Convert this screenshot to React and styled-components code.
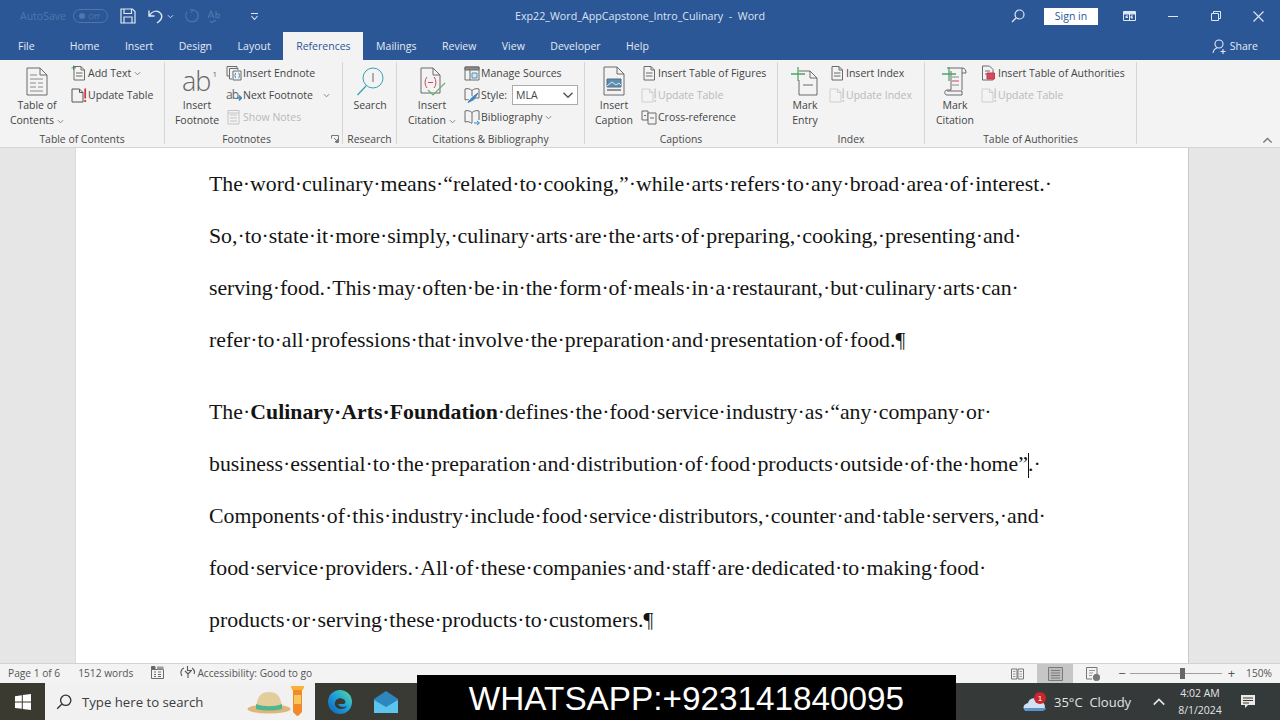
import React from "react";
import styled, { createGlobalStyle } from "styled-components";

const Global = createGlobalStyle`
  html, body { margin: 0; padding: 0; background: #e6e6e6; }
  * { box-sizing: border-box; }
`;

const UI = `"Open Sans", "Noto Sans", sans-serif`;

const Shell = styled.div`
  position: relative;
  width: 1280px;
  height: 720px;
  overflow: hidden;
  display: flex;
  flex-direction: column;
  font-family: ${UI};
`;

/* title bar */
const TitleBar = styled.div`
  height: 32px;
  background: #2b5797;
  display: grid;
  grid-template-columns: 1fr auto 1fr;
  align-items: center;
  color: #dbe4f1;
  font-size: 10.7px;
`;
const QuickAccess = styled.div`
  display: flex;
  align-items: center;
  padding-left: 20px;
`;
const AutoSave = styled.span`
  color: #4f76ad;
  font-size: 10.5px;
  width: 53px;
`;
const Toggle = styled.span`
  width: 35px;
  height: 14px;
  border: 1px solid #4f76ad;
  border-radius: 7px;
  color: #4f76ad;
  font-size: 8px;
  line-height: 12px;
  padding-left: 14px;
  margin-right: 12px;
  position: relative;
  &::before {
    content: "";
    position: absolute;
    left: 5px;
    top: 3px;
    width: 6px;
    height: 6px;
    border-radius: 50%;
    background: #4f76ad;
  }
`;
const QuickSlot = styled.span`
  display: flex;
  margin-right: ${(p) => p.$gap || 0}px;
`;
const WindowControls = styled.div`
  display: flex;
  align-items: center;
  justify-content: flex-end;
`;
const SignIn = styled.span`
  width: 54px;
  height: 17px;
  margin: 0 10px 0 19px;
  background: #fff;
  color: #2b5797;
  font-size: 10.5px;
  line-height: 17px;
  text-align: center;
`;
const WinButton = styled.span`
  width: 43px;
  display: flex;
  justify-content: center;
`;

/* tabs */
const TabRow = styled.div`
  height: 28px;
  background: #2b5797;
  display: flex;
  align-items: stretch;
  padding-left: 18px;
`;
const Tab = styled.div`
  padding: ${(p) => (p.$file ? "0 22.3px 0 0" : "0 12.77px")};
  display: flex;
  align-items: center;
  font-size: 10.5px;
  color: ${(p) => (p.$active ? "#2b5797" : "#e4eaf4")};
  background: ${(p) => (p.$active ? "#f3f3f3" : "transparent")};
`;
const Share = styled.div`
  margin-left: auto;
  padding-right: 22px;
  display: flex;
  align-items: center;
  gap: 4px;
  font-size: 10.5px;
  color: #e4eaf4;
`;

/* ribbon */
const Ribbon = styled.div`
  height: 88px;
  background: #f3f3f3;
  border-bottom: 1px solid #d4d4d4;
  display: flex;
  padding-top: 2px;
  color: #444;
  font-size: 10.5px;
`;
const Group = styled.div`
  width: ${(p) => p.$width}px;
  height: 82px;
  border-right: 1px solid #d6d6d6;
  display: flex;
  flex-direction: column;
`;
const GroupBody = styled.div`
  flex: none;
  height: 66px;
  display: flex;
  padding-left: ${(p) => p.$pad || 0}px;
`;
const GroupLabel = styled.div`
  margin-top: 4px;
  padding-right: ${(p) => (p.$launcher ? 14 : 0)}px;
  display: grid;
  grid-template-columns: 1fr auto 1fr;
  align-items: center;
  font-size: 10.4px;
  color: #4a4a4a;
  line-height: 14px;
  white-space: nowrap;
  & > span { grid-column: 2; }
  & > svg { grid-column: 3; justify-self: end; margin-right: -11px; }
`;
const BigButton = styled.div`
  width: ${(p) => p.$width}px;
  margin-right: ${(p) => p.$gap || 0}px;
  display: flex;
  flex-direction: column;
  align-items: center;
  padding-top: 4px;
`;
const BigIcon = styled.div`
  height: 30px;
  margin-bottom: 2px;
  display: flex;
  align-items: center;
  justify-content: center;
`;
const BigLabel = styled.div`
  line-height: 15px;
  text-align: center;
  white-space: nowrap;
`;
const Stack = styled.div`
  display: flex;
  flex-direction: column;
`;
const SmallRow = styled.div`
  height: 22px;
  display: flex;
  align-items: center;
  white-space: nowrap;
  color: ${(p) => (p.$off ? "#b9b9b9" : "#444")};
`;
const SmallIcon = styled.span`
  width: 17px;
  display: flex;
  align-items: center;
`;
const StyleSelect = styled.div`
  width: 66px;
  height: 20px;
  margin-left: 5px;
  padding: 0 3px;
  border: 1px solid #ababab;
  background: #fff;
  display: flex;
  align-items: center;
  justify-content: space-between;
`;
const AbGlyph = styled.span`
  font-family: "Open Sans", sans-serif;
  font-weight: 300;
  font-size: 27px;
  line-height: 28px;
  color: #666;
  letter-spacing: -1px;
  padding-left: 4px;
  & sup { font-size: 8px; font-weight: 400; vertical-align: 14px; line-height: 0; margin-left: 2px; }
`;
const SmallAb = styled.span`
  font-size: 12px;
  color: #666;
  letter-spacing: -1px;
  line-height: 16px;
`;
const CollapseSlot = styled.div`
  margin-left: auto;
  padding: 0 7px 1px 0;
  align-self: flex-end;
  display: flex;
`;

/* document */
const DocArea = styled.div`
  height: 515px;
  background: #e6e6e6;
  overflow: hidden;
`;
const Page = styled.div`
  width: 1114px;
  height: 100%;
  margin-left: 75px;
  background: #fff;
  border-right: 1px solid #c9c9c9;
  border-left: 1px solid #dcdcdc;
  padding: 10px 0 0 133px;
  font-family: "Liberation Serif", serif;
  font-size: 21.8px;
  color: #141414;
`;
const Para = styled.div`
  margin-bottom: 20px;
`;
const Line = styled.div`
  height: 52px;
  line-height: 52px;
  white-space: nowrap;
  letter-spacing: ${(p) => p.$track || 0}px;
`;
const Caret = styled.span`
  display: inline-block;
  width: 0;
  height: 25px;
  margin-right: -1px;
  border-left: 1px solid #111;
  vertical-align: -7px;
`;

/* status bar */
const StatusBar = styled.div`
  height: 20px;
  background: #f3f3f3;
  border-top: 1px solid #d2d2d2;
  display: flex;
  align-items: center;
  padding-left: 8px;
  font-size: 10.2px;
  color: #555;
`;
const StatusItem = styled.span`
  display: flex;
  align-items: center;
  gap: ${(p) => (p.$flush ? 2 : 1)}px;
  margin-right: ${(p) => p.$gap || 0}px;
  margin-left: ${(p) => (p.$push ? "auto" : 0)};
  padding-bottom: ${(p) => (p.$flush ? 0 : 2)}px;
`;
const ViewButton = styled.span`
  width: 36px;
  height: 19px;
  display: flex;
  align-items: center;
  justify-content: center;
  background: ${(p) => (p.$active ? "#c6c6c6" : "transparent")};
`;
const ZoomTrack = styled.div`
  position: relative;
  width: 92px;
  height: 1px;
  margin: 0 4px 0 2px;
  background: #a0a0a0;
  &::after {
    content: "";
    position: absolute;
    left: 50px;
    top: -5px;
    width: 5px;
    height: 11px;
    background: #666;
  }
`;
const ZoomSign = styled.span`
  font-size: 13px;
  color: #555;
  line-height: 1;
  margin-left: ${(p) => p.$left || 0}px;
`;

/* taskbar */
const Taskbar = styled.div`
  height: 37px;
  background: linear-gradient(to right, #3b3a30, #34393a);
  display: flex;
  align-items: center;
  color: #e4e4e4;
`;
const StartSlot = styled.div`
  width: 45px;
  display: flex;
  justify-content: center;
`;
const SearchBox = styled.div`
  width: 270px;
  height: 37px;
  background: #f1f1f1;
  display: flex;
  align-items: center;
  padding-left: 11px;
  color: #3c3c3c;
  font-size: 13.2px;
`;
const SearchText = styled.span`
  margin-left: 10px;
  width: 165px;
`;
const TaskApp = styled.div`
  width: ${(p) => p.$width || 46}px;
  margin-left: ${(p) => p.$left || 0}px;
  display: flex;
  justify-content: center;
`;
const Tray = styled.div`
  margin-left: auto;
  padding-right: 16px;
  display: flex;
  align-items: center;
`;
const Weather = styled.span`
  margin-left: 7px;
  font-size: 13px;
  width: 95px;
  white-space: pre;
`;
const Clock = styled.div`
  width: 64px;
  margin-left: 2px;
  text-align: center;
  font-size: 10.5px;
  line-height: 17px;
`;

const Banner = styled.div`
  position: absolute;
  left: 417px;
  top: 675px;
  width: 539px;
  height: 45px;
  background: #000;
  color: #fff;
  font-family: "Liberation Sans", Arial, sans-serif;
  font-size: 33.3px;
  line-height: 47px;
  text-align: center;
`;

/* icons */
const Ic = ({ w, h, children }) => (
  <svg width={w} height={h} viewBox={`0 0 ${w} ${h}`} fill="none" stroke="#6b6b6b" strokeWidth="1">
    {children}
  </svg>
);
const Chev = ({ c = "#777", s = 7, up, gap = 3 }) => (
  <svg width={s} height={s} viewBox="0 0 8 8" fill="none" stroke={c} strokeWidth="1" style={{ marginLeft: gap, verticalAlign: "middle" }}>
    <path d={up ? "M1 5.5L4 2.5L7 5.5" : "M1 2.5L4 5.5L7 2.5"} />
  </svg>
);

const TocIcon = () => (
  <Ic w={24} h={29}>
    <path d="M2 1H15L22 8V28H2Z" />
    <path d="M15 1V8H22" />
    <path d="M5 8H12M5 12H18M5 16H11M13 16H18M5 20H11M13 20H18M5 24H18" stroke="#8a8a8a" />
  </Ic>
);
const PageLines = ({ plus, off }) => (
  <Ic w={16} h={16}>
    <g stroke={off ? "#c9c9c9" : "#6b6b6b"}>
      <path d="M3 1.5H10L13.5 5V15H3Z" />
      <path d="M10 1.5V5H13.5" />
      <path d="M5 8H11.5M5 11H11.5" />
    </g>
    {plus && <path d="M2.5 0.5V5M0.5 2.8H5" stroke="#3f9a5c" />}
  </Ic>
);
const UpdateIcon = ({ off }) => (
  <Ic w={16} h={16}>
    <g stroke={off ? "#cfcfcf" : "#555"}>
      <path d="M1 2H8.5L12 5.5V15H1Z" />
      <path d="M8.5 2V5.5H12" />
    </g>
    <path d="M14.2 1.5V11.5M14.2 13V15" stroke={off ? "#cfcfcf" : "#d1344b"} strokeWidth="1.8" />
  </Ic>
);
const EndnoteIcon = () => (
  <Ic w={17} h={16}>
    <path d="M1 1.5H11V3M1 1.5V11H3" />
    <path d="M3.5 3.5H12V5M3.5 3.5V14H6" />
    <path d="M7 6H15V15H7Z" />
    <path d="M10 8C9 8 9.5 10.5 8.7 10.5C9.5 10.5 9 13 10 13M12.5 8C13.5 8 13 10.5 13.8 10.5C13 10.5 13.5 13 12.5 13" stroke="#2f7fb8" />
  </Ic>
);
const NextNoteIcon = () => (
  <svg width="5" height="8" viewBox="0 0 5 8" fill="none" stroke="#2f86c0" strokeWidth="1.4" style={{ marginLeft: -1, marginTop: 5 }}>
    <path d="M0 4H4M2 1.5L4.5 4L2 6.5" />
  </svg>
);
const NotesIcon = () => (
  <Ic w={16} h={16}>
    <g stroke="#c4c4c4">
      <path d="M2 1.5H13V15H2Z" />
      <path d="M4 6H11M4 9H11M4 12H11M2 4H13" />
    </g>
  </Ic>
);
const SearchIcon = () => (
  <Ic w={28} h={30}>
    <circle cx="17" cy="12" r="10" stroke="#3aa0b6" />
    <path d="M17 7V16" stroke="#666" />
    <path d="M10 20L1.5 29" stroke="#3aa0b6" strokeWidth="1.3" />
  </Ic>
);
const CitationIcon = () => (
  <Ic w={28} h={31}>
    <path d="M3 2H15L22 9V27H3Z" />
    <path d="M15 2V9H22" />
    <path d="M9 11C6.5 14 6.5 19 9 22M16 11C18.5 14 18.5 19 16 22M10 16.5H15" stroke="#c8475a" />
    <path d="M10 24L15 29L27 17" stroke="#6cae72" strokeWidth="1.2" />
  </Ic>
);
const SourcesIcon = () => (
  <Ic w={17} h={16}>
    <path d="M1 2H15V15H1Z" />
    <path d="M1 2H15V5H1Z" fill="#8a8a8a" />
    <path d="M6 5V15" />
    <path d="M8 8H13V13H8Z" fill="#d7e6ef" stroke="#4c8fb5" />
  </Ic>
);
const StyleIcon = () => (
  <Ic w={17} h={17}>
    <path d="M1 2C4 1 6 2 8 3.5C10 2 12 1 15 2V11H11M1 2V13C3 12.5 4 12.5 5 13M8 3.5V9" />
    <path d="M4 15.5L8 10.5L14 6L10 12.5Z" fill="#3e86c2" stroke="#3e86c2" />
  </Ic>
);
const BibIcon = () => (
  <Ic w={17} h={17}>
    <path d="M1 2C4 1 6 2 8 3.5C10 2 12 1 15 2V11M1 2V13C4 12 6 13 8 14.5M8 3.5V14" />
    <path d="M10 14H15M13 12L15.5 14L13 16" stroke="#3e86c2" />
  </Ic>
);
const CaptionIcon = () => (
  <Ic w={22} h={30}>
    <path d="M1 1H14L21 8V29H1Z" />
    <path d="M14 1V8H21" />
    <path d="M4 13H18V21H4Z" fill="#5d8db0" stroke="#4d6f8a" />
    <path d="M4 20L9 16L13 19L16 17L18 19" stroke="#dbe8f0" />
    <path d="M4 24H18" stroke="#333" />
  </Ic>
);
const CrossRefIcon = () => (
  <Ic w={17} h={16}>
    <path d="M1 2H7V11H1Z" />
    <path d="M7 4H15V15H7Z" fill="#f3f3f3" />
    <path d="M3 6.5H5M9 9H13" />
  </Ic>
);
const EntryIcon = () => (
  <Ic w={30} h={30}>
    <path d="M9 5H20L27 12V29H9V14" />
    <path d="M20 5V12H27" />
    <path d="M13 19H23" />
    <path d="M1 8H15M8 1V15" stroke="#4fa56a" strokeWidth="1.3" />
  </Ic>
);
const ScrollIcon = () => (
  <Ic w={28} h={31}>
    <path d="M6 2H21V24M21 2C24 2 25 4 25 7H21" />
    <path d="M10 5V24M6 25H21V29H6C3 29 3 24 6 24H10" />
    <path d="M1 8H15M8 1V15" stroke="#4fa56a" strokeWidth="1.3" />
    <path d="M11 15H18" stroke="#c8475a" />
    <path d="M11 11H18M11 19H18" stroke="#8a8a8a" />
  </Ic>
);
const AuthoritiesIcon = () => (
  <Ic w={16} h={16}>
    <path d="M1.5 1H8.5L12 4.5V15H1.5Z" />
    <path d="M4 6H9M4 9H7" />
    <path d="M6 8H13.5V14H6Z" fill="#d9495c" stroke="#c23a4d" />
  </Ic>
);
const LauncherIcon = () => (
  <svg width="8" height="8" viewBox="0 0 8 8" fill="none" stroke="#777">
    <path d="M0.5 3.5V0.5H7.5V7.5H4.5M3 3L6.5 6.5M6.5 4V6.5H4" />
  </svg>
);
const SaveIcon = () => (
  <Ic w={16} h={16}>
    <g stroke="#dfe7f3" strokeWidth="1.2">
      <path d="M1 1H12.5L15 3.5V15H1Z" />
      <path d="M4 1V5.5H11.5V1M4 15V9H12V15" />
    </g>
  </Ic>
);
const UndoIcon = () => (
  <Ic w={16} h={15}>
    <path d="M1 1.5V7H6.5M1.5 6.5C4 2.5 8 1.5 11 3C15 5.5 15 10 9 14" stroke="#dfe7f3" strokeWidth="1.4" />
  </Ic>
);
const RedoIcon = () => (
  <Ic w={16} h={16}>
    <path d="M9 2C13 2.5 15 6 14 9.5C12.5 14 7 15 3.5 12C1 9.5 1.5 6 3 4M6 1.5L9 2L7 4.5" stroke="#4f76ad" strokeWidth="1.2" />
  </Ic>
);
const SpellIcon = () => (
  <svg width="17" height="14" viewBox="0 0 17 14" fill="none" stroke="#4f76ad" strokeWidth="1.1">
    <path d="M1 9L4 2L7 9M2 7H6M9 2V9M9 6C10 4.5 13 5 12.5 7C12.5 9 10 9.5 9 8M3 12L5 13.5L9 11" />
  </svg>
);
const CustomizeIcon = () => (
  <svg width="9" height="9" viewBox="0 0 9 9" fill="none" stroke="#dfe7f3" strokeWidth="1.1">
    <path d="M1 1.5H8M1.5 4L4.5 7.5L7.5 4" />
  </svg>
);
const LoupeIcon = ({ c = "#dfe7f3", s = 14 }) => (
  <svg width={s} height={s} viewBox="0 0 14 14" fill="none" stroke={c} strokeWidth="1.2">
    <circle cx="8.5" cy="5.5" r="4.5" />
    <path d="M5 9L1 13" />
  </svg>
);
const DisplayIcon = () => (
  <svg width="13" height="10" viewBox="0 0 13 10" fill="none" stroke="#dfe7f3">
    <path d="M0.5 0.5H12.5V9.5H0.5Z" />
    <path d="M1 1H12V3H1ZM6.5 3V9M3 5H5M8 5H10M3 5V7L4 6L5 7M8 5V7H10" fill="#dfe7f3" />
  </svg>
);
const MinIcon = () => (
  <svg width="10" height="10" viewBox="0 0 10 10" stroke="#dfe7f3"><path d="M0 5.5H10" /></svg>
);
const RestoreIcon = () => (
  <svg width="10" height="10" viewBox="0 0 10 10" fill="none" stroke="#dfe7f3">
    <path d="M0.5 2.5H7.5V9.5H0.5Z" />
    <path d="M2.5 2.5V0.5H9.5V7.5H7.5" />
  </svg>
);
const CloseIcon = () => (
  <svg width="11" height="11" viewBox="0 0 11 11" stroke="#dfe7f3" strokeWidth="1.1"><path d="M0.5 0.5L10.5 10.5M10.5 0.5L0.5 10.5" /></svg>
);
const ShareIcon = () => (
  <svg width="14" height="15" viewBox="0 0 14 15" fill="none" stroke="#e4eaf4" strokeWidth="1.1">
    <circle cx="7" cy="5" r="4" />
    <path d="M1 14C1.5 11 3 9.5 5 9M8.5 12.5H13.5M11 10V15" />
  </svg>
);
const CalendarIcon = () => (
  <Ic w={13} h={13}>
    <path d="M0.5 3.5H12.5V12.5H0.5Z" />
    <path d="M0.5 0.5H4V3.5H0.5Z" fill="#666" />
    <path d="M6 0.5H12.5V3.5H6Z" fill="#999" stroke="none" />
    <path d="M3 6H5M7 6H10M3 8.5H5M7 8.5H10M3 10.5H5M7 10.5H10" />
  </Ic>
);
const AccessIcon = () => (
  <svg width="16" height="13" viewBox="0 0 16 13" fill="none" stroke="#555" strokeWidth="1.1">
    <path d="M4 2C1 3 0 7 2 10M12 2C14 3.5 15 6 14 8M7.5 0V4.5H12M5 5L8 8L11 5M8 8V12" />
  </svg>
);
const ReadIcon = () => (
  <Ic w={13} h={12}>
    <path d="M0.5 1H6V11H0.5ZM7 1H12.5V11H7Z" stroke="#777" />
    <path d="M2 3.5H4.5M2 6H4.5M2 8.5H4.5M8.5 3.5H11M8.5 6H11M8.5 8.5H11" stroke="#999" />
  </Ic>
);
const PrintIcon = () => (
  <Ic w={15} h={14}>
    <path d="M0.5 0.5H14.5V13.5H0.5Z" stroke="#7a7a7a" fill="#bcbcbc" />
    <path d="M3 3.5H12M3 6H12M3 8.5H12M3 11H12" stroke="#7a7a7a" />
  </Ic>
);
const WebIcon = () => (
  <Ic w={14} h={14}>
    <path d="M0.5 0.5H11V7M0.5 0.5V12H6" stroke="#777" />
    <path d="M3 3.5H9M3 6H7M3 8.5H6" stroke="#999" />
    <circle cx="10.5" cy="10.5" r="3.2" fill="#777" stroke="#777" />
  </Ic>
);
const WindowsIcon = () => (
  <svg width="16" height="16" viewBox="0 0 16 16" fill="#fff">
    <path d="M0 2.2L6.8 1.2V7.6H0ZM7.8 1L16 0V7.6H7.8ZM0 8.5H6.8V14.8L0 13.9ZM7.8 8.5H16V16L7.8 14.9Z" />
  </svg>
);
const HatIcon = () => (
  <svg width="58" height="37" viewBox="0 0 58 37" style={{ flex: "none" }}>
    <ellipse cx="22" cy="26" rx="21.5" ry="4.5" fill="#dfb679" />
    <path d="M9 25C10 13 14 9 22 9C30 9 34 13 35 25Z" fill="#e4cd9d" />
    <path d="M9 21C17 24 27 24 35 21V26C27 28 17 28 9 26Z" fill="#4fb58f" />
    <path d="M44 3H57L55 7V29L51 33H50L46 29V7Z" fill="#f28a2c" />
    <path d="M44 3H57L56 7H45Z" fill="#f7b233" />
    <path d="M47 12H54V21H47Z" fill="#f9c65c" />
  </svg>
);
const EdgeIcon = () => (
  <svg width="24" height="24" viewBox="0 0 24 24">
    <defs>
      <linearGradient id="edgeFill" x1="0" y1="1" x2="1" y2="0">
        <stop offset="0" stopColor="#0f5fb5" />
        <stop offset="0.55" stopColor="#1fa3dc" />
        <stop offset="1" stopColor="#5ce08a" />
      </linearGradient>
    </defs>
    <circle cx="12" cy="12" r="12" fill="url(#edgeFill)" />
    <path d="M7 15C6 10 11 7 15 9C18 10.5 18 13 16 14H10C11 17 15 18 19 16C17 20 8 20 7 15Z" fill="#39392f" />
  </svg>
);
const MailIcon = () => (
  <svg width="24" height="22" viewBox="0 0 24 22">
    <path d="M12 0L24 8V22H0V8Z" fill="#2d86bd" />
    <path d="M0 9L12 16L24 9V22H0Z" fill="#5cc4ee" />
  </svg>
);
const CloudIcon = () => (
  <svg width="24" height="22" viewBox="0 0 24 22">
    <path d="M5 20C-1 20 -1 13 5 12C6 6 14 6 16 10C23 10 24 20 18 20Z" fill="#cfe2f3" />
    <path d="M5 20C2 20 1 18 1 17H23C23 19 21 20 18 20Z" fill="#5b93c9" />
    <circle cx="17" cy="7" r="6" fill="#c9252d" />
    <text x="17" y="10" fontSize="8" fill="#fff" textAnchor="middle" fontFamily="Liberation Sans">1</text>
  </svg>
);
const NotifyIcon = () => (
  <svg width="16" height="16" viewBox="0 0 16 16" fill="#e9e9e9">
    <path d="M1 1H15V11H8L5 14V11H1Z" />
    <path d="M3 4H13M3 6.5H13M3 9H9" stroke="#39392f" />
  </svg>
);

const Small = ({ icon, label, off, children }) => (
  <SmallRow $off={off}>
    <SmallIcon>{icon}</SmallIcon>
    {label}
    {children}
  </SmallRow>
);

const tabs = ["Home", "Insert", "Design", "Layout", "References", "Mailings", "Review", "View", "Developer", "Help"];

const para1 = [
  ["The·word·culinary·means·“related·to·cooking,”·while·arts·refers·to·any·broad·area·of·interest.·", -0.02],
  ["So,·to·state·it·more·simply,·culinary·arts·are·the·arts·of·preparing,·cooking,·presenting·and·", -0.02],
  ["serving·food.·This·may·often·be·in·the·form·of·meals·in·a·restaurant,·but·culinary·arts·can·", -0.066],
  ["refer·to·all·professions·that·involve·the·preparation·and·presentation·of·food.¶", 0.025],
];
const para2 = [
  ["Components·of·this·industry·include·food·service·distributors,·counter·and·table·servers,·and·", 0.03],
  ["food·service·providers.·All·of·these·companies·and·staff·are·dedicated·to·making·food·", 0],
  ["products·or·serving·these·products·to·customers.¶", 0.06],
];

export default function App() {
  return (
    <Shell>
      <Global />
      <TitleBar>
        <QuickAccess>
          <AutoSave>AutoSave</AutoSave>
          <Toggle>Off</Toggle>
          <QuickSlot $gap={12}><SaveIcon /></QuickSlot>
          <QuickSlot><UndoIcon /></QuickSlot>
          <QuickSlot $gap={10}><Chev c="#dfe7f3" s={7} /></QuickSlot>
          <QuickSlot $gap={7}><RedoIcon /></QuickSlot>
          <QuickSlot $gap={26}><SpellIcon /></QuickSlot>
          <QuickSlot><CustomizeIcon /></QuickSlot>
        </QuickAccess>
        <span>Exp22_Word_AppCapstone_Intro_Culinary &nbsp;-&nbsp; Word</span>
        <WindowControls>
          <LoupeIcon />
          <SignIn>Sign in</SignIn>
          <WinButton><DisplayIcon /></WinButton>
          <WinButton><MinIcon /></WinButton>
          <WinButton><RestoreIcon /></WinButton>
          <WinButton><CloseIcon /></WinButton>
        </WindowControls>
      </TitleBar>

      <TabRow>
        <Tab $file>File</Tab>
        {tabs.map((t) => (
          <Tab key={t} $active={t === "References"}>{t}</Tab>
        ))}
        <Share><ShareIcon />Share</Share>
      </TabRow>

      <Ribbon>
        <Group $width={165}>
          <GroupBody $pad={6}>
            <BigButton $width={62} $gap={3}>
              <BigIcon><TocIcon /></BigIcon>
              <BigLabel>Table of<br />Contents<Chev /></BigLabel>
            </BigButton>
            <Stack>
              <Small icon={<PageLines plus />} label="Add Text"><Chev /></Small>
              <Small icon={<UpdateIcon />} label="Update Table" />
            </Stack>
          </GroupBody>
          <GroupLabel><span>Table of Contents</span></GroupLabel>
        </Group>

        <Group $width={178}>
          <GroupBody $pad={7}>
            <BigButton $width={50} $gap={4}>
              <BigIcon><AbGlyph>ab<sup>1</sup></AbGlyph></BigIcon>
              <BigLabel>Insert<br />Footnote</BigLabel>
            </BigButton>
            <Stack>
              <Small icon={<EndnoteIcon />} label="Insert Endnote" />
              <Small icon={<><SmallAb>ab</SmallAb><NextNoteIcon /></>} label="Next Footnote"><Chev gap={10} /></Small>
              <Small icon={<NotesIcon />} label="Show Notes" off />
            </Stack>
          </GroupBody>
          <GroupLabel $launcher><span>Footnotes</span><LauncherIcon /></GroupLabel>
        </Group>

        <Group $width={54}>
          <GroupBody $pad={1}>
            <BigButton $width={54}>
              <BigIcon><SearchIcon /></BigIcon>
              <BigLabel>Search</BigLabel>
            </BigButton>
          </GroupBody>
          <GroupLabel><span>Research</span></GroupLabel>
        </Group>

        <Group $width={188}>
          <GroupBody $pad={6}>
            <BigButton $width={58} $gap={3}>
              <BigIcon><CitationIcon /></BigIcon>
              <BigLabel>Insert<br />Citation<Chev /></BigLabel>
            </BigButton>
            <Stack>
              <Small icon={<SourcesIcon />} label="Manage Sources" />
              <Small icon={<StyleIcon />} label="Style:">
                <StyleSelect>MLA<Chev s={12} c="#555" /></StyleSelect>
              </Small>
              <Small icon={<BibIcon />} label="Bibliography"><Chev /></Small>
            </Stack>
          </GroupBody>
          <GroupLabel><span>Citations &amp; Bibliography</span></GroupLabel>
        </Group>

        <Group $width={193}>
          <GroupBody $pad={5}>
            <BigButton $width={48} $gap={3}>
              <BigIcon><CaptionIcon /></BigIcon>
              <BigLabel>Insert<br />Caption</BigLabel>
            </BigButton>
            <Stack>
              <Small icon={<PageLines />} label="Insert Table of Figures" />
              <Small icon={<UpdateIcon off />} label="Update Table" off />
              <Small icon={<CrossRefIcon />} label="Cross-reference" />
            </Stack>
          </GroupBody>
          <GroupLabel><span>Captions</span></GroupLabel>
        </Group>

        <Group $width={147}>
          <GroupBody $pad={6}>
            <BigButton $width={42} $gap={3}>
              <BigIcon><EntryIcon /></BigIcon>
              <BigLabel>Mark<br />Entry</BigLabel>
            </BigButton>
            <Stack>
              <Small icon={<PageLines />} label="Insert Index" />
              <Small icon={<UpdateIcon off />} label="Update Index" off />
            </Stack>
          </GroupBody>
          <GroupLabel><span>Index</span></GroupLabel>
        </Group>

        <Group $width={212}>
          <GroupBody $pad={8}>
            <BigButton $width={44} $gap={4}>
              <BigIcon><ScrollIcon /></BigIcon>
              <BigLabel>Mark<br />Citation</BigLabel>
            </BigButton>
            <Stack>
              <Small icon={<AuthoritiesIcon />} label="Insert Table of Authorities" />
              <Small icon={<UpdateIcon off />} label="Update Table" off />
            </Stack>
          </GroupBody>
          <GroupLabel><span>Table of Authorities</span></GroupLabel>
        </Group>

        <CollapseSlot><Chev s={11} c="#777" up /></CollapseSlot>
      </Ribbon>

      <DocArea>
        <Page>
          <Para>
            {para1.map(([l, t]) => <Line key={l} $track={t}>{l}</Line>)}
          </Para>
          <Para>
            <Line $track={0.02}>The·<b>Culinary·Arts·Foundation</b>·defines·the·food·service·industry·as·“any·company·or·</Line>
            <Line $track={0.02}>business·essential·to·the·preparation·and·distribution·of·food·products·outside·of·the·home”<Caret />.·</Line>
            {para2.map(([l, t]) => <Line key={l} $track={t}>{l}</Line>)}
          </Para>
        </Page>
      </DocArea>

      <StatusBar>
        <StatusItem $gap={18}>Page 1 of 6</StatusItem>
        <StatusItem $gap={18}>1512 words</StatusItem>
        <StatusItem $gap={16}><CalendarIcon /></StatusItem>
        <StatusItem><AccessIcon />Accessibility: Good to go</StatusItem>
        <StatusItem $push $flush>
          <ViewButton><ReadIcon /></ViewButton>
          <ViewButton $active><PrintIcon /></ViewButton>
          <ViewButton><WebIcon /></ViewButton>
        </StatusItem>
        <StatusItem $gap={11} $flush>
          <ZoomSign $left={7}>−</ZoomSign>
          <ZoomTrack />
          <ZoomSign>+</ZoomSign>
        </StatusItem>
        <StatusItem $gap={8}>150%</StatusItem>
      </StatusBar>

      <Taskbar>
        <StartSlot><WindowsIcon /></StartSlot>
        <SearchBox>
          <LoupeIcon c="#333" s={16} />
          <SearchText>Type here to search</SearchText>
          <HatIcon />
        </SearchBox>
        <TaskApp $left={2}><EdgeIcon /></TaskApp>
        <TaskApp><MailIcon /></TaskApp>
        <Tray>
          <CloudIcon />
          <Weather>35°C  Cloudy</Weather>
          <Chev s={14} c="#e4e4e4" up />
          <Clock>4:02 AM<br />8/1/2024</Clock>
          <TaskApp $width={32}><NotifyIcon /></TaskApp>
        </Tray>
      </Taskbar>

      <Banner>WHATSAPP:+923141840095</Banner>
    </Shell>
  );
}
